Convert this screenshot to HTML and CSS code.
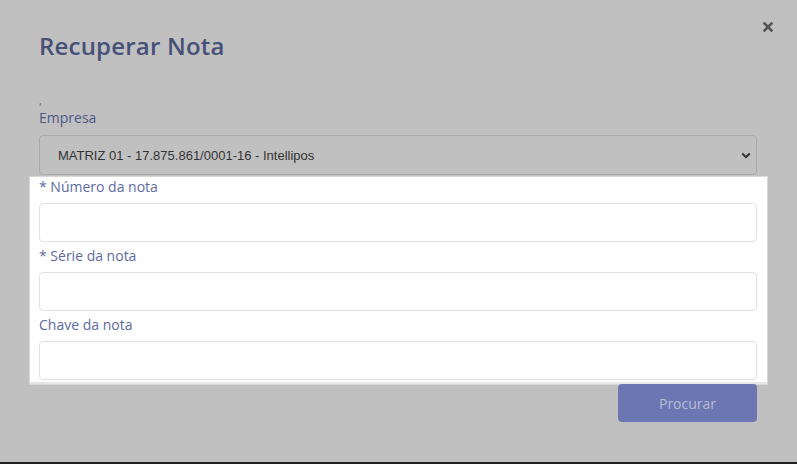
FILE: index.html
```html
<!DOCTYPE html>
<html lang="pt-BR">
  <head>
    <meta charset="UTF-8" />
    <meta name="viewport" content="width=device-width, initial-scale=1.0" />
    <title>Recuperar Nota</title>
    <link rel="stylesheet" href="styles.css">
  </head>
  <body>
    <div class="modal">
      <div class="modal-header">
        <h2>Recuperar Nota</h2>
        <button class="close" aria-label="Fechar">
          <svg width="10" height="10" viewBox="0 0 10 10">
            <path d="M1.5 1.5 L8.5 8.5 M8.5 1.5 L1.5 8.5" stroke="#555" stroke-width="2.6" stroke-linecap="square" />
          </svg>
        </button>
      </div>

      <div class="stray">,</div>
      <label class="label" for="empresa">Empresa</label>
      <div class="select-wrap">
        <select id="empresa">
          <option>MATRIZ 01 - 17.875.861/0001-16 - Intellipos</option>
        </select>
        <svg class="chevron" width="10" height="7" viewBox="0 0 10 7">
          <path d="M1.2 1.4 L5 5 L8.8 1.4" fill="none" stroke="#333" stroke-width="2" />
        </svg>
      </div>

      <div class="highlight">
        <label class="label" for="numero">* Número da nota</label>
        <input type="text" id="numero" />
        <label class="label" for="serie">* Série da nota</label>
        <input type="text" id="serie" />
        <label class="label" for="chave">Chave da nota</label>
        <input type="text" id="chave" />
      </div>

      <div class="actions">
        <button class="btn">Procurar</button>
      </div>
    </div>
    <div class="page-edge"></div>
  </body>
</html>
```

FILE: styles.css
```css
body {
  margin: 0;
  background: #c0c0c0;
  font-family: "Open Sans", Arial, sans-serif;
  height: 464px;
  overflow: hidden;
}
.modal {
  height: 462px;
  padding: 0 40px 0 39px;
  box-sizing: border-box;
}
.modal-header {
  display: flex;
  justify-content: space-between;
  align-items: flex-start;
}
.modal-header h2 {
  margin: 0;
  padding-top: 28px;
  font-size: 24px;
  font-weight: 600;
  line-height: 36px;
  color: #475079;
  letter-spacing: 0.2px;
}
.close {
  margin-top: 22px;
  margin-right: -16px;
  padding: 0;
  width: 10px;
  height: 10px;
  border: none;
  background: none;
  display: flex;
}
.stray {
  margin-top: 32px;
  height: 12px;
  font-size: 10px;
  line-height: 10px;
  color: #4f5785;
}
.label {
  display: block;
  font-size: 14px;
  line-height: 20px;
  color: #4f5785;
}
.select-wrap {
  position: relative;
  margin-top: 7px;
}
select {
  width: 100%;
  height: 40px;
  padding: 0 0 0 18px;
  border: 1px solid #a9a9ab;
  border-radius: 4px;
  background: #c0c0c0;
  color: #333;
  font-family: "Liberation Sans", Arial, sans-serif;
  font-size: 13px;
  -webkit-appearance: none;
  appearance: none;
}
.chevron {
  position: absolute;
  right: 6px;
  top: 17px;
}
.highlight {
  margin: 2px -10px 0 -9px;
  padding: 0 10px 2px 9px;
  background: #fff;
  border-bottom: 2px solid #e6e6e6;
  box-shadow: 0 0 0 1px #d8d8d8;
}
.highlight .label {
  color: #5e6aa3;
  margin-top: 1px;
}
input {
  display: block;
  width: 100%;
  height: 39px;
  margin: 6px 0 4px;
  box-sizing: border-box;
  border: 1px solid #dfe2e8;
  border-radius: 4px;
  background: #fff;
  font-size: 14px;
}
.highlight input:last-child {
  margin-bottom: 0;
}
.actions {
  display: flex;
  justify-content: flex-end;
}
.btn {
  width: 139px;
  height: 38px;
  border: none;
  border-radius: 4px;
  background: #6b76b3;
  color: #b9bcd6;
  font-family: "Open Sans", Arial, sans-serif;
  font-size: 14px;
}
.page-edge {
  height: 2px;
  background: #222;
}
```
